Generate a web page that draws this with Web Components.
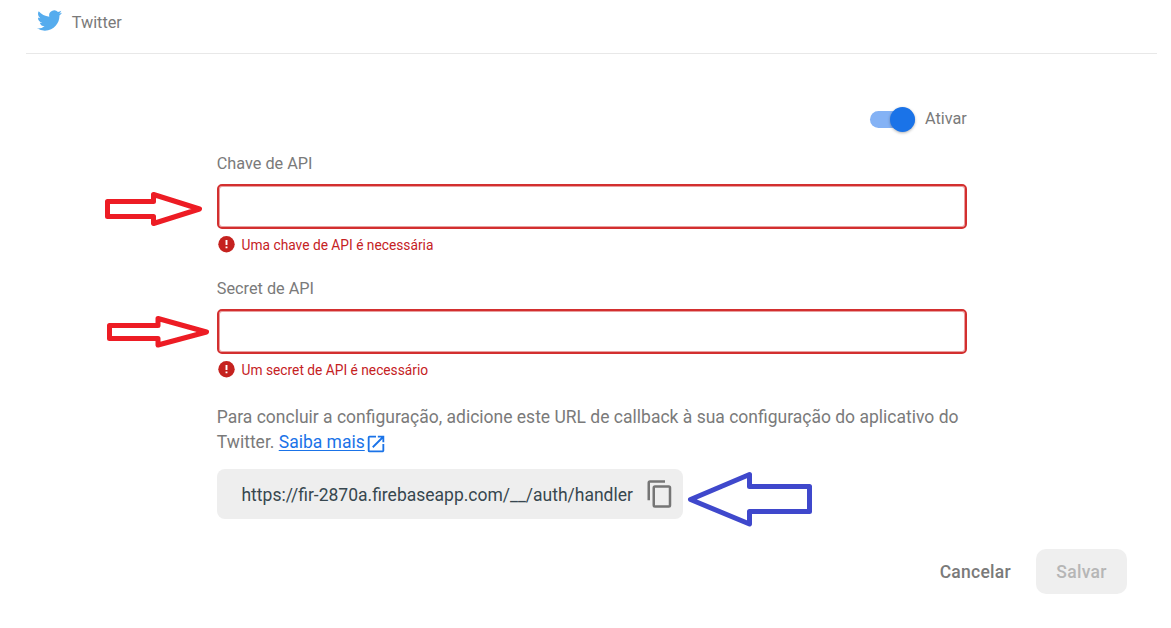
<!DOCTYPE html>
<html lang="pt-BR">
<head>
<meta charset="utf-8">
<title>Twitter</title>
<style>
body{margin:0;background:#fff;font-family:Roboto,"Liberation Sans",sans-serif;color:#7a7a7a}
</style>
</head>
<body>
<provider-panel></provider-panel>
<script>
function define(name, html, setup) {
  const tpl = document.createElement('template');
  tpl.innerHTML = html;
  customElements.define(name, class extends HTMLElement {
    constructor() {
      super();
      this.attachShadow({mode: 'open'}).append(tpl.content.cloneNode(true));
    }
    connectedCallback() { if (setup) setup(this, this.shadowRoot); }
  });
}

define('provider-header', `
<style>
:host{display:flex;box-sizing:border-box;height:54px;margin:0 14px 0 26px;padding:8px 0 0 11px;border-bottom:1px solid #e8e8e8;font-size:16.25px;line-height:30px}
svg{display:block;width:25px;height:25px;margin-right:9.7px}
</style>
<svg viewBox="0 0 24 24"><path fill="#55acee" d="M23.953 4.57a10 10 0 01-2.825.775 4.958 4.958 0 002.163-2.723c-.951.555-2.005.959-3.127 1.184a4.92 4.92 0 00-8.384 4.482C7.69 8.095 4.067 6.13 1.64 3.162a4.822 4.822 0 00-.666 2.475c0 1.71.87 3.213 2.188 4.096a4.904 4.904 0 01-2.228-.616v.06a4.923 4.923 0 003.946 4.827 4.996 4.996 0 01-2.212.085 4.936 4.936 0 004.604 3.417 9.867 9.867 0 01-6.102 2.105c-.39 0-.779-.023-1.17-.067a13.995 13.995 0 007.557 2.209c9.053 0 13.998-7.496 13.998-13.985 0-.21 0-.42-.015-.63A9.935 9.935 0 0024 4.59z"/></svg>
<slot></slot>`);

define('toggle-switch', `
<style>
:host{display:flex;justify-content:flex-end;align-items:center;height:26px;font-size:16.25px}
.track{display:flex;align-items:center;justify-content:flex-end;width:45px;height:17px;margin-right:10px;border-radius:9px;background:#84b2f5}
.thumb{width:25px;height:25px;border-radius:50%;background:#1a73e8;box-shadow:0 1px 3px rgba(0,0,0,.3)}
.label{position:relative;top:-1px}
</style>
<span class="track"><span class="thumb"></span></span><span class="label"><slot></slot></span>`);

define('api-field', `
<style>
:host{display:block;height:125px}
label{display:block;box-sizing:border-box;height:33px;padding-top:1px;font-size:16.25px;line-height:24px}
.box{box-sizing:border-box;height:45px;border:2px solid #d32f2f;border-radius:5px;box-shadow:inset 0 0 0 1px #e9a0a0}
.error{display:flex;align-items:center;height:30px;padding-left:1px;color:#c5221f;font-size:13.75px}
svg{width:17px;height:17px;margin-right:6.8px}
.msg{position:relative;top:1px}
</style>
<label></label><div class="box"></div>
<div class="error"><svg viewBox="0 0 17 17"><circle cx="8.5" cy="8.2" r="8.2" fill="#c5221f"/><path d="M8.5 4v5M8.5 10.4v1.8" stroke="#fff" stroke-width="1.9"/></svg><span class="msg"><slot></slot></span></div>`,
(el, root) => { root.querySelector('label').textContent = el.getAttribute('label'); });

define('help-text', `
<style>
:host{display:block;margin-top:4px;font-size:17.5px;line-height:25px}
a{color:#1a73e8;text-decoration:underline;text-decoration-thickness:1px;text-underline-offset:2px}
svg{width:22px;height:22px;margin:0 0 0 .5px;vertical-align:-7px}
div{white-space:nowrap;height:25px}
</style>
<div>Para concluir a configuração, adicione este URL de callback à sua configuração do aplicativo do</div>
<div>Twitter. <a>Saiba mais</a><svg viewBox="0 0 24 24"><path fill="#1a73e8" d="M19 19H5V5h7V3H5a2 2 0 0 0-2 2v14a2 2 0 0 0 2 2h14c1.1 0 2-.9 2-2v-7h-2v7zM14 3v2h3.59l-9.83 9.83 1.41 1.41L19 6.41V10h2V3h-7z"/></svg></div>`);

define('copy-url', `
<style>
:host{display:flex;align-items:center;box-sizing:border-box;width:466px;height:50px;padding-left:24.7px;border-radius:8px;background:#eee;color:#37474f;font-size:17.5px}
.url{flex:none;width:404px;padding-top:2px;white-space:nowrap}
svg{width:30px;height:30px}
</style>
<span class="url"><slot></slot></span>
<svg viewBox="0 0 24 24"><path fill="#757575" d="M16 1H4a2 2 0 0 0-2 2v14h2V3h12V1zm3 4H8a2 2 0 0 0-2 2v14a2 2 0 0 0 2 2h11a2 2 0 0 0 2-2V7a2 2 0 0 0-2-2zm0 16H8V7h11v14z"/></svg>`);

define('action-button', `
<style>
:host{display:flex;align-items:center;justify-content:center;box-sizing:border-box;height:45px;font-size:17.5px;font-weight:500;letter-spacing:.27px}
:host([disabled]){width:91px;border-radius:10px;background:#efefef;color:#b6b6b6}
</style><slot></slot>`);

define('callout-arrow', `
<style>
:host{position:absolute;inset:0;pointer-events:none}
svg{display:block;width:1171px;height:628px}
polygon{fill:none;stroke-width:5;stroke-linejoin:round}
</style>
<svg viewBox="0 0 1171 628"><polygon/></svg>`,
(el, root) => {
  const p = root.querySelector('polygon');
  p.setAttribute('points', el.getAttribute('points'));
  p.setAttribute('stroke', el.getAttribute('color'));
});

define('provider-panel', `
<style>
:host{display:block;position:relative;height:628px;overflow:hidden}
main{width:750px;margin-left:216.8px;padding-top:52px}
toggle-switch{margin-bottom:19px}
copy-url{margin-top:14px}
footer{display:flex;justify-content:flex-end;gap:25px;margin:30px 44px 0 0}
</style>
<provider-header>Twitter</provider-header>
<main>
<toggle-switch>Ativar</toggle-switch>
<api-field label="Chave de API">Uma chave de API é necessária</api-field>
<api-field label="Secret de API">Um secret de API é necessário</api-field>
<help-text></help-text>
<copy-url>https://fir-2870a.firebaseapp.com/__/auth/handler</copy-url>
</main>
<footer><action-button>Cancelar</action-button><action-button disabled>Salvar</action-button></footer>
<callout-arrow color="#ed1c24" points="107.5,201.5 153.5,201.5 153.5,194.5 199.5,209 153.5,223.5 153.5,216.5 107.5,216.5"></callout-arrow>
<callout-arrow color="#ed1c24" points="109.5,325.5 158,325.5 158,318.5 206.5,332 158,345 158,338.5 109.5,338.5"></callout-arrow>
<callout-arrow color="#3f48cc" points="809.5,486.5 749.5,486.5 749.5,474.5 690.5,499.5 749.5,524 749.5,511.5 809.5,511.5"></callout-arrow>`);
</script>
</body>
</html>
